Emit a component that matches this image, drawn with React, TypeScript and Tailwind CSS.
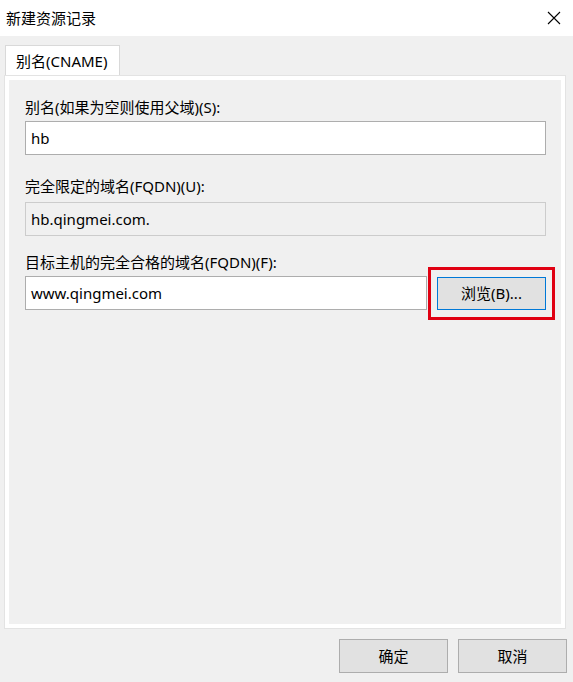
import React from 'react';

const FONT = { fontFamily: '"Segoe UI", "Noto Sans", "Noto Sans CJK SC", sans-serif' };

const Field: React.FC<{ value: string; readOnly?: boolean; className?: string }> = ({ value, readOnly, className }) => (
    <div
        className={`h-[34px] flex items-center px-[5px] text-[15px] text-black border ${readOnly
            ? 'bg-[#f0f0f0] border-[#cccccc]'
            : 'bg-white border-[#adadad]'
            } ${className ?? ''}`}
    >
        {value}
    </div>
);

export default function App() {
    return (
        <div className="w-[573px] h-[682px] bg-[#f0f0f0] flex flex-col overflow-hidden" style={FONT}>
            {/* Title bar */}
            <div className="h-[36px] bg-white flex items-center justify-between pl-[6px] pr-[12px] shrink-0">
                <span className="text-[15px] text-black">新建资源记录</span>
                <svg width="14" height="14" viewBox="0 0 14 14" className="text-black">
                    <path d="M1 1 L13 13 M13 1 L1 13" stroke="currentColor" strokeWidth="1.1" fill="none" />
                </svg>
            </div>

            {/* Tabs */}
            <div className="pl-[5px] pr-[8px] pt-[9px] flex flex-col">
                <div className="w-[115px] h-[31px] bg-white border border-b-0 border-[#d9d9d9] flex items-center pl-[10px] text-[15px] text-black">
                    别名(CNAME)
                </div>

                <div className="h-[552px] border-[4px] border-white ring-1 ring-[#e3e3e3] bg-[#f0f0f0] pl-[16px] pr-[15px] pt-[17px] flex flex-col">
                    <div className="h-[20px] leading-[20px] text-[15px] text-black">别名(如果为空则使用父域)(S):</div>
                    <Field value="hb" className="mt-[4px]" />

                    <div className="h-[20px] leading-[20px] text-[15px] text-black mt-[21px]">完全限定的域名(FQDN)(U):</div>
                    <Field value="hb.qingmei.com." readOnly className="mt-[6px]" />

                    <div className="h-[20px] leading-[20px] text-[15px] text-black mt-[16px]">目标主机的完全合格的域名(FQDN)(F):</div>
                    <div className="flex items-start gap-[10px] mt-[4px]">
                        <Field value="www.qingmei.com" className="w-[402px]" />
                        <div className="relative">
                            <button className="w-[109px] h-[33px] mt-[1px] bg-[#e1e1e1] border border-[#0078d7] text-[15px] text-black flex items-center justify-center">
                                浏览(B)...
                            </button>
                            <span className="absolute -left-[9px] -top-[9px] -right-[9px] -bottom-[10px] border-[3px] border-[#e00012] pointer-events-none"></span>
                        </div>
                    </div>
                </div>
            </div>

            {/* Footer buttons */}
            <div className="flex justify-end gap-[10px] pr-[6px] mt-[11px]">
                <button className="w-[109px] h-[34px] bg-[#e1e1e1] border border-[#adadad] text-[15px] text-black">确定</button>
                <button className="w-[109px] h-[34px] bg-[#e1e1e1] border border-[#adadad] text-[15px] text-black">取消</button>
            </div>
        </div>
    );
}
